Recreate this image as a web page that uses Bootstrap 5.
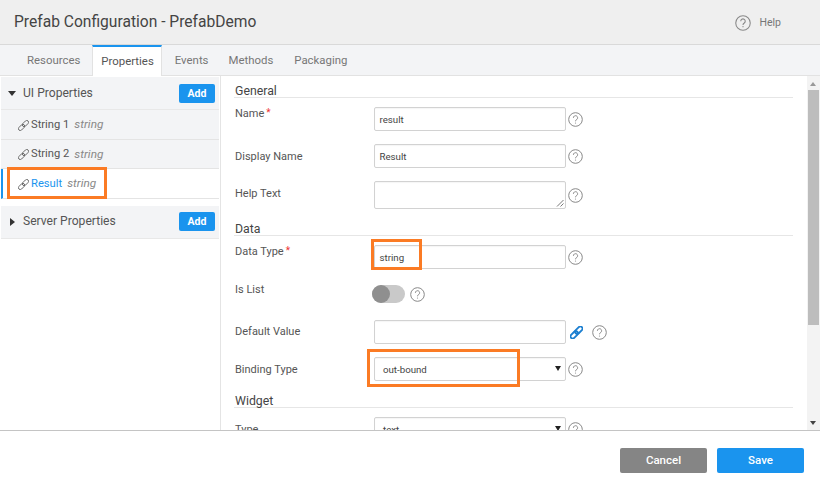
<!DOCTYPE html>
<html lang="en">
<head>
    <meta charset="UTF-8">
    <meta name="viewport" content="width=device-width, initial-scale=1.0">
    <title>Prefab Configuration</title>
    <link rel="stylesheet" href="https://cdn.jsdelivr.net/npm/bootstrap@5.3.0/dist/css/bootstrap.min.css">
    <style>
        html, body { height: 100%; overflow: hidden; }
        body { font-family: Roboto, "Liberation Sans", sans-serif; font-size: 11px; color: #444; background: #fff; }
        .dlg { width: 820px; height: 490px; position: relative; overflow: hidden; }
        .dlg-head { height: 45px; background: #efefef; border-bottom: 1px solid #d9d9d9; padding: 1px 39px 0 14px; }
        .dlg-title { font-size: 15.6px; color: #444; }
        .dlg-help { font-size: 10.5px; color: #777; gap: 8px; }
        .tabs-bar { height: 31px; background: #f3f4f6; border-bottom: 1px solid #e2e2e2; padding-left: 14px; }
        .tab-item { padding: 0 12px 0 13px; height: 31px; line-height: 30px; font-size: 11.4px; color: #777; }
        .tab-item.on { background: #fff; color: #555; border-top: 2px solid #1a94ee; border-left: 1px solid #e2e2e2; border-right: 1px solid #e2e2e2; line-height: 28px; padding: 0 7px 0 8px; }
        .tab-item.after { padding-left: 12px; padding-right: 9px; }
        .tab-item.tab-events { padding-left: 13px; padding-right: 8px; }
        .dlg-body { height: 354px; }
        .side { width: 221px; border-right: 1px solid #e4e4e4; padding: 1px 0 0 1px; flex: none; }
        .group-head { height: 33px; background: #f3f4f6; border-bottom: 1px solid #e8e8e8; padding: 0 4px 0 7px; font-size: 12.1px; color: #555; margin-right: 1px; }
        .group-head .caret-down { width: 0; height: 0; border-left: 4px solid transparent; border-right: 4px solid transparent; border-top: 5px solid #333; margin-right: 7px; }
        .group-head .caret-right { width: 0; height: 0; border-top: 4px solid transparent; border-bottom: 4px solid transparent; border-left: 5px solid #333; margin: 0 8px 0 2px; }
        .add-btn { width: 36px; height: 19px; padding: 0; background: #1a94ee; border: 0; border-radius: 2px; color: #fff; font-size: 10.5px; font-weight: 700; line-height: 19px; }
        .prop-row { height: 29.5px; padding: 2px 0 0 17px; background: #f3f4f6; border-bottom: 1px solid #e4e4e4; font-size: 11.2px; color: #555; gap: 2px; margin-right: 1px; }
        .prop-row em { color: #888; margin-left: 3px; font-size: 11.8px; }
        .prop-row.on { background: #fff; color: #1a94ee; border-left: 2px solid #1a94ee; padding-left: 15px; }
        .group-gap { height: 7px; }
        .main-pane { flex: 1; padding-left: 13px; overflow: hidden; }
        .sect { width: 559px; height: 22px; padding: 9px 0 0 1px; font-size: 12.3px; line-height: 12px; color: #444; border-bottom: 1px solid #e6e6e6; }
        .sect-widget { margin-top: 5px; }
        .frow { height: 24px; margin-bottom: 13px; width: 365px; }
        .frow-area { height: 28px; margin-bottom: 5px; }
        .frow-datatype { margin-bottom: 16px; }
        .frow-switch { height: 18px; margin-bottom: 17px; }
        .frow-last { margin-bottom: 0; }
        .sect + .frow { margin-top: 9px; }
        .frow label { width: 140px; flex: none; align-self: flex-start; font-size: 11px; line-height: 14px; padding-left: 1px; color: #555; margin-top: -1px; }
        .frow-switch label { margin-top: -2px; }
        .frow label.mid { align-self: center; margin-top: 1px; }
        .frow label.mid-flat { align-self: center; margin-top: -1px; }
        .frow label.mid-up { align-self: center; margin-top: -3px; }
        .req { color: #e33; font-size: 10px; margin-left: 2px; vertical-align: 1px; }
        .fld { width: 192px; height: 24px; flex: none; border: 1px solid #d2d2d2; border-radius: 2px; font-size: 9.7px; padding: 0 4px 0 4.5px; color: #444; background: #fff; box-shadow: inset 0 1px 1px rgba(0,0,0,.04); line-height: 23px; }
        .fld.sel { padding: 0 8px; position: relative; }
        .fld.sel::after { content: ""; position: absolute; right: 4px; top: 8px; border-left: 3px solid transparent; border-right: 3px solid transparent; border-top: 5px solid #222; }
        .fld.area { height: 28px; position: relative; }
        .grip { position: absolute; right: 1px; bottom: 1px; }
        .qmark { margin-left: 2px; flex: none; }
        .qmark-switch { margin-left: 5px; }
        .qmark-link { margin-left: 9px; }
        .link-blue { margin-left: 4px; flex: none; }
        .switch-track { width: 33px; height: 18px; border-radius: 9px; background: #c9c9c9; position: relative; margin-left: -2px; flex: none; }
        .switch-knob { position: absolute; left: 0; top: 0; width: 18px; height: 18px; border-radius: 50%; background: #8f8f8f; }
        .sbar { width: 13px; flex: none; background: #f3f3f3; position: relative; }
        .sbar-thumb { position: absolute; left: 1px; right: 1px; top: 14px; height: 235px; background: #bdbdbd; }
        .sbar-up { position: absolute; left: 3px; top: 6px; border-left: 3px solid transparent; border-right: 3px solid transparent; border-bottom: 4px solid #999; }
        .sbar-down { position: absolute; left: 3px; bottom: 5px; border-left: 3px solid transparent; border-right: 3px solid transparent; border-top: 4px solid #444; }
        .dlg-foot { height: 60px; border-top: 1px solid #c4c4c4; padding: 17px 16px 0 0; gap: 10px; }
        .foot-btn { width: 87px; height: 25px; padding: 0; border: 0; border-radius: 2px; color: #fff; font-size: 11.5px; font-weight: 500; }
        .foot-cancel { background: #858585; }
        .foot-save { background: #1a94ee; }
        .mark-box { position: absolute; border: 3px solid #fb7b24; pointer-events: none; }
        .mark-a { left: 7px; top: 167px; width: 100px; height: 32px; }
        .mark-b { left: 371px; top: 239px; width: 51px; height: 31px; }
        .mark-c { left: 367px; top: 349px; width: 153px; height: 38px; }
    </style>
</head>
<body>
    <svg class="d-none">
        <symbol id="q15" viewBox="0 0 15 15"><circle cx="7.5" cy="7.5" r="6.8" fill="none" stroke="#888"/><path d="M5.4 5.8a2.1 2.1 0 1 1 3.3 1.7c-.8.5-1.2.9-1.2 1.8" fill="none" stroke="#888"/><circle cx="7.5" cy="11" r=".6" fill="#888"/></symbol>
        <symbol id="chain" viewBox="0 0 12 12"><g transform="rotate(-45 6 6)" fill="none" stroke="currentColor"><rect x="-1" y="4" width="8" height="4" rx="2"/><rect x="5" y="4" width="8" height="4" rx="2"/></g></symbol>
    </svg>
    <div class="dlg">
        <!-- header -->
        <div class="dlg-head d-flex align-items-center">
            <div class="dlg-title">Prefab Configuration - PrefabDemo</div>
            <div class="dlg-help d-flex align-items-center ms-auto">
                <svg width="16" height="16"><use href="#q15"/></svg>
                <span>Help</span>
            </div>
        </div>
        <!-- tabs -->
        <div class="tabs-bar d-flex">
            <div class="tab-item">Resources</div>
            <div class="tab-item on">Properties</div>
            <div class="tab-item after tab-events">Events</div>
            <div class="tab-item after">Methods</div>
            <div class="tab-item after">Packaging</div>
        </div>
        <div class="dlg-body d-flex">
            <!-- left list -->
            <div class="side">
                <div class="group-head d-flex align-items-center">
                    <span class="caret-down"></span><span>UI Properties</span>
                    <button class="add-btn ms-auto" type="button">Add</button>
                </div>
                <div class="prop-row d-flex align-items-center">
                    <svg width="11" height="11" color="#666"><use href="#chain"/></svg>
                    <span>String 1</span><em>string</em>
                </div>
                <div class="prop-row d-flex align-items-center">
                    <svg width="11" height="11" color="#666"><use href="#chain"/></svg>
                    <span>String 2</span><em>string</em>
                </div>
                <div class="prop-row on d-flex align-items-center">
                    <svg width="11" height="11" color="#666"><use href="#chain"/></svg>
                    <span>Result</span><em>string</em>
                </div>
                <div class="group-gap"></div>
                <div class="group-head d-flex align-items-center">
                    <span class="caret-right"></span><span>Server Properties</span>
                    <button class="add-btn ms-auto" type="button">Add</button>
                </div>
            </div>
            <!-- form -->
            <div class="main-pane">
                <div class="sect">General</div>
                <div class="frow d-flex align-items-center">
                    <label>Name<span class="req">*</span></label>
                    <div class="fld">result</div>
                    <svg class="qmark" width="15" height="15"><use href="#q15"/></svg>
                </div>
                <div class="frow d-flex align-items-center">
                    <label class="mid">Display Name</label>
                    <div class="fld">Result</div>
                    <svg class="qmark" width="15" height="15"><use href="#q15"/></svg>
                </div>
                <div class="frow frow-area d-flex align-items-center">
                    <label class="mid-up">Help Text</label>
                    <div class="fld area">
                        <svg class="grip" width="8" height="8" viewBox="0 0 8 8" stroke="#555" stroke-width=".8"><path d="M1 7.5 7.5 1M4.5 7.5 7.5 4.5"/></svg>
                    </div>
                    <svg class="qmark" width="15" height="15"><use href="#q15"/></svg>
                </div>
                <div class="sect">Data</div>
                <div class="frow frow-datatype d-flex align-items-center">
                    <label>Data Type<span class="req">*</span></label>
                    <div class="fld">string</div>
                    <svg class="qmark" width="15" height="15"><use href="#q15"/></svg>
                </div>
                <div class="frow frow-switch d-flex align-items-center">
                    <label>Is List</label>
                    <div class="switch-track"><div class="switch-knob"></div></div>
                    <svg class="qmark qmark-switch" width="15" height="15"><use href="#q15"/></svg>
                </div>
                <div class="frow d-flex align-items-center">
                    <label class="mid-flat">Default Value</label>
                    <div class="fld">&nbsp;</div>
                    <svg class="link-blue" width="13" height="13" viewBox="0 0 12 12" fill="none" stroke="#1c7fd0" stroke-width="1.7"><g transform="rotate(-45 6 6)"><rect x="-1" y="4" width="8" height="4" rx="2"/><rect x="5" y="4" width="8" height="4" rx="2"/></g></svg>
                    <svg class="qmark qmark-link" width="15" height="15"><use href="#q15"/></svg>
                </div>
                <div class="frow frow-last d-flex align-items-center">
                    <label class="mid">Binding Type</label>
                    <div class="fld sel">out-bound</div>
                    <svg class="qmark" width="15" height="15"><use href="#q15"/></svg>
                </div>
                <div class="sect sect-widget">Widget</div>
                <div class="frow d-flex align-items-center">
                    <label class="mid">Type</label>
                    <div class="fld sel">text</div>
                    <svg class="qmark" width="15" height="15"><use href="#q15"/></svg>
                </div>
            </div>
            <div class="sbar">
                <div class="sbar-up"></div>
                <div class="sbar-thumb"></div>
                <div class="sbar-down"></div>
            </div>
        </div>
        <!-- footer -->
        <div class="dlg-foot d-flex justify-content-end align-items-start">
            <button class="foot-btn foot-cancel" type="button">Cancel</button>
            <button class="foot-btn foot-save" type="button">Save</button>
        </div>
        <!-- orange callouts -->
        <div class="mark-box mark-a"></div>
        <div class="mark-box mark-b"></div>
        <div class="mark-box mark-c"></div>
    </div>
    <script src="https://cdn.jsdelivr.net/npm/bootstrap@5.3.0/dist/js/bootstrap.bundle.min.js"></script>
</body>
</html>
